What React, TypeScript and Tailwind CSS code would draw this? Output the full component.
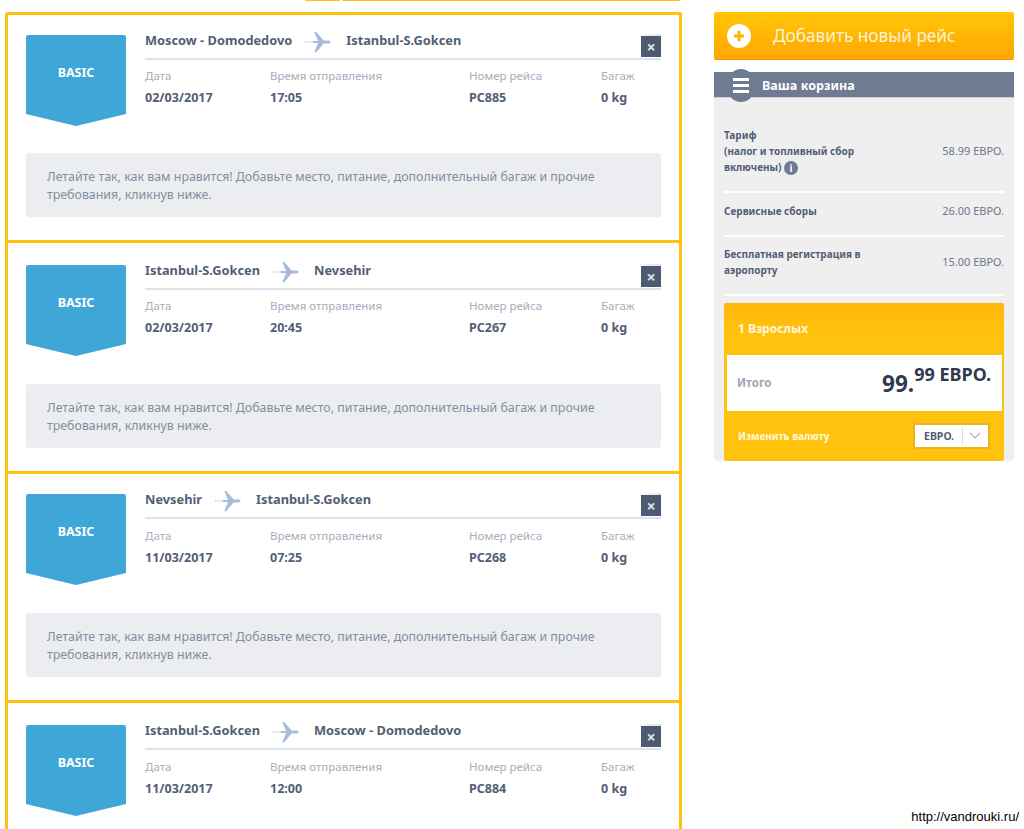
const font = { fontFamily: '"Noto Sans", "Open Sans", sans-serif' };

function PlaneIcon() {
  return (
    <svg width="27" height="24" viewBox="0 0 28 24" className="shrink-0">
      <path d="M1 12h1.5M4 12h1.5M7 12h1.5" stroke="#a9bcd9" strokeWidth="1.2" fill="none" />
      <path
        d="M9 11h5.600L10.600 1.500h2.100L20.400 10.400l5 .1c1.400 0 2.100.7 2.100 1.500s-.7 1.500-2.100 1.500l-5 .1-7.700 8.900h-2.100L14.600 13H9z"
        fill="#a9bcd9"
      />
    </svg>
  );
}

type Leg = {
  from: string;
  to: string;
  date: string;
  time: string;
  flight: string;
  height: string;
  pad: string;
  fieldGap: string;
  boxGap: string;
  titleShift: string;
  note: boolean;
};

const legs: Leg[] = [
  { from: "Moscow - Domodedovo", to: "Istanbul-S.Gokcen", date: "02/03/2017", time: "17:05", flight: "PC885", height: "h-[228px]", pad: "pt-[20px]", fieldGap: "mt-[8px]", boxGap: "mt-[27px]", titleShift: "pb-[12px]", note: true },
  { from: "Istanbul-S.Gokcen", to: "Nevsehir", date: "02/03/2017", time: "20:45", flight: "PC267", height: "h-[231px]", pad: "pt-[22px]", fieldGap: "mt-[8px]", boxGap: "mt-[28px]", titleShift: "pb-[11px]", note: true },
  { from: "Nevsehir", to: "Istanbul-S.Gokcen", date: "11/03/2017", time: "07:25", flight: "PC268", height: "h-[229px]", pad: "pt-[20px]", fieldGap: "mt-[9px]", boxGap: "mt-[28px]", titleShift: "pb-[11px]", note: true },
  { from: "Istanbul-S.Gokcen", to: "Moscow - Domodedovo", date: "11/03/2017", time: "12:00", flight: "PC884", height: "h-[129px]", pad: "pt-[22px]", fieldGap: "mt-[9px]", boxGap: "mt-[28px]", titleShift: "pb-[12px]", note: false },
];

function Field({ label, value, className }: { label: string; value: string; className: string }) {
  return (
    <div className={className}>
      <div className="text-[11.500px] leading-[16px] text-[#a7aebb]">{label}</div>
      <div className="mt-[6px] text-[12.500px] leading-[16px] font-bold text-[#525e74]">{value}</div>
    </div>
  );
}

function Badge() {
  return (
    <div className="h-[91px] w-[100px] shrink-0 rounded-t-[2px] bg-[#3fa6d8] pt-[30px] text-center text-[12.500px] leading-[16px] font-bold text-white [clip-path:polygon(0_0,100%_0,100%_79px,50%_91px,0_79px)]">
      BASIC
    </div>
  );
}

function Card({ leg }: { leg: Leg }) {
  return (
    <div className={`${leg.height} ${leg.pad} shrink-0 border-[3px] border-b-0 border-[#ffc20e] bg-white px-[18px] first:rounded-t-[3px]`}>
      <div className="flex">
        <Badge />
        <div className="ml-[19px] flex-1">
          <div className={`relative flex h-[25px] items-center border-b-2 border-[#dbe4f0] ${leg.titleShift}`}>
            <span className="text-[12.800px] font-bold text-[#525e74]">{leg.from}</span>
            <span className="relative top-[1px] mr-[15px] ml-[12px]">
              <PlaneIcon />
            </span>
            <span className="text-[12.800px] font-bold text-[#525e74]">{leg.to}</span>
            <div className="absolute top-[-1px] right-0 h-[2px] w-[24px] bg-gradient-to-r from-white to-[#dbe4f0]" />
            <button className="absolute top-[1px] right-0 flex h-[21px] w-[20px] items-center justify-center bg-[#4d5a70] text-[16px] leading-none font-bold text-[#dfe3ea]">
              ×
            </button>
          </div>
          <div className={`${leg.fieldGap} flex`}>
            <Field label="Дата" value={leg.date} className="w-[125px]" />
            <Field label="Время отправления" value={leg.time} className="w-[199px]" />
            <Field label="Номер рейса" value={leg.flight} className="w-[132px]" />
            <Field label="Багаж" value="0 kg" className="w-[60px]" />
          </div>
        </div>
      </div>
      {leg.note && (
        <div className={`${leg.boxGap} h-[64px] rounded-[3px] bg-[#ecedf0] px-[21px] pt-[15px] text-[12.400px] leading-[18px] text-[#838da0]`}>
          Летайте так, как вам нравится! Добавьте место, питание, дополнительный багаж и прочие требования, кликнув ниже.
        </div>
      )}
    </div>
  );
}

function CartRow({ label, price, className, priceClass }: { label: React.ReactNode; price: string; className: string; priceClass: string }) {
  return (
    <div className={`flex justify-between border-b-2 border-white ${className}`}>
      <div className="w-[165px] text-[10px] leading-[16px] font-bold text-[#525e74]">{label}</div>
      <div className={`text-[11px] leading-[16px] text-[#6d788c] ${priceClass}`}>{price}</div>
    </div>
  );
}

export default function App() {
  return (
    <div className="relative h-[829px] w-[1024px] overflow-hidden bg-white" style={font}>
      <div className="absolute top-0 left-[305px] h-[1px] w-[35px] rounded-b-[1px] bg-[#ffc20e]" />
      <div className="absolute top-0 left-[342px] h-[1px] w-[338px] rounded-b-[1px] bg-[#ffc20e]" />
      <div className="flex">
        <div className="ml-[5px] flex w-[677px] shrink-0 flex-col pt-[12px]">
          {legs.map((l) => (
            <Card key={l.flight} leg={l} />
          ))}
        </div>
        <div className="ml-[32px] w-[300px] shrink-0 pt-[12px]">
          <div className="flex h-[48px] items-center rounded-[2px] border-b border-[#e79a00] bg-gradient-to-b from-[#ffc60a] to-[#ffa600] pl-[13px]">
            <div className="flex h-[24px] w-[24px] items-center justify-center rounded-full bg-white">
              <svg width="14" height="14" viewBox="0 0 14 14">
                <path d="M7 2v10M2 7h10" stroke="#ffb400" strokeWidth="3" />
              </svg>
            </div>
            <span className="ml-[22px] text-[17.200px] text-[#fdf3d6]">Добавить новый рейс</span>
          </div>
          <div className="relative mt-[12px] flex h-[26px] items-center border-b border-[#c9ced7] bg-[#6e7b91] pt-[3px] pl-[48px] text-[12.600px] font-bold text-white">
            <div className="absolute top-[-3px] left-[14px] flex h-[33px] w-[26px] flex-col items-center justify-center gap-[3px] rounded-full bg-[#6e7b91]">
              <span className="h-[3px] w-[16px] bg-white" />
              <span className="h-[3px] w-[16px] bg-white" />
              <span className="h-[3px] w-[16px] bg-white" />
            </div>
            Ваша корзина
          </div>
          <div className="rounded-b-[4px] bg-[#efefef] px-[10px]">
            <CartRow
              className="h-[95px] pt-[29px]"
              priceClass="mt-[16px]"
              price="58.99 ЕВРО."
              label={
                <>
                  Тариф
                  <br />
                  (налог и топливный сбор
                  <br />
                  включены){" "}
                  <span className="inline-flex h-[14px] w-[14px] items-center justify-center rounded-full bg-[#6e7b91] align-middle text-[10px] leading-none text-white">
                    i
                  </span>
                </>
              }
            />
            <CartRow className="h-[44px] pt-[10px]" priceClass="" price="26.00 ЕВРО." label="Сервисные сборы" />
            <CartRow className="h-[59px] pt-[9px]" priceClass="mt-[8px]" price="15.00 ЕВРО." label="Бесплатная регистрация в аэропорту" />
            <div className="mt-[7px] h-[158px] rounded-[2px] bg-gradient-to-b from-[#ffb60a] to-[#ffc20e] to-[30px]">
              <div className="flex h-[52px] items-center pl-[14px] text-[12px] font-bold text-[#fff7dc]">1 Взрослых</div>
              <div className="mr-[2px] ml-[3px] flex h-[56px] items-center justify-between bg-white pr-[11px] pl-[10px]">
                <span className="text-[11.500px] font-bold text-[#a0a7b5]">Итого</span>
                <span className="leading-[30px] font-bold text-[#2f3a4f]">
                  <span className="relative top-[2px] text-[22.500px]">99.</span>
                  <span className="relative top-[-9px] text-[18px]">99 ЕВРО.</span>
                </span>
              </div>
              <div className="flex h-[50px] items-center justify-between pr-[14px] pl-[14px]">
                <span className="text-[10px] font-bold text-[#fff7dc]">Изменить валюту</span>
                <div className="flex h-[26px] w-[77px] items-center border-2 border-[#e8b520] bg-white">
                  <span className="w-[48px] border-r border-[#d8dde6] pl-[9px] text-[10.500px] leading-[18px] font-bold text-[#525e74]">ЕВРО.</span>
                  <svg width="12" height="8" viewBox="0 0 12 8" className="ml-[6px]">
                    <path d="M1 1l5 5 5-5" stroke="#a7aebb" strokeWidth="1.200" fill="none" />
                  </svg>
                </div>
              </div>
            </div>
          </div>
        </div>
      </div>
      <div className="absolute top-[807px] right-[5px] text-[13px] text-black" style={{ fontFamily: '"Liberation Sans", sans-serif' }}>
        http://vandrouki.ru/
      </div>
    </div>
  );
}
